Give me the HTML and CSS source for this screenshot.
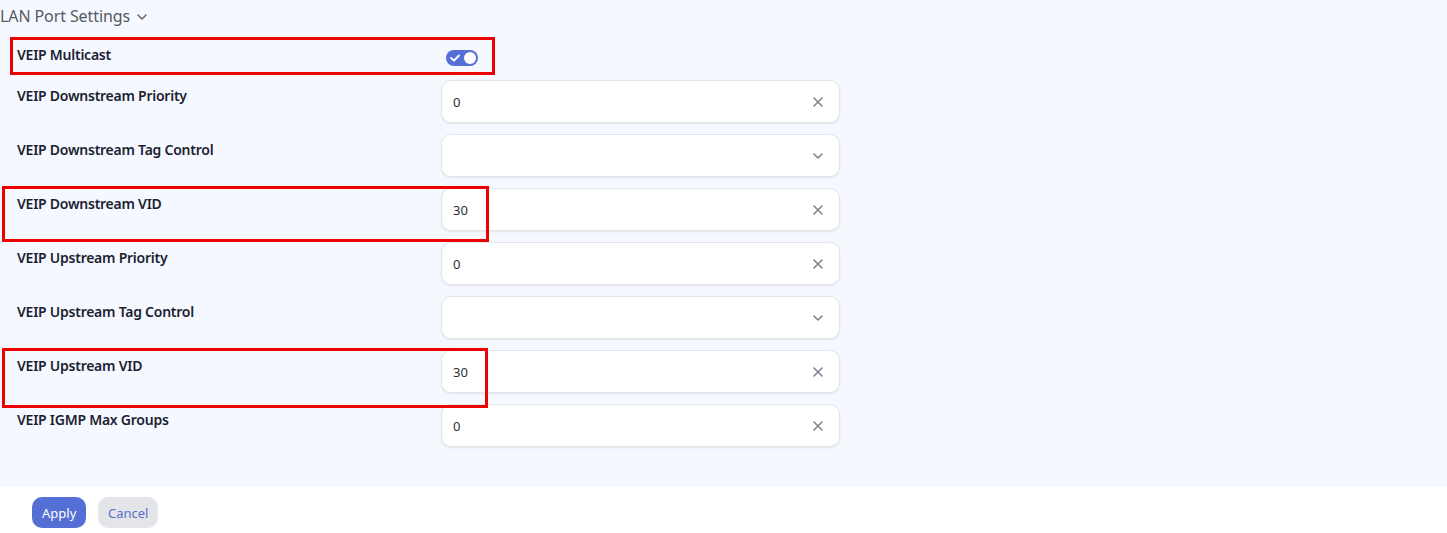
FILE: index.html
```html
<!DOCTYPE html>
<html>
<head>
<meta charset="utf-8">
<link rel="stylesheet" href="styles.css">
</head>
<body>
<div class="page">
  <section class="panel">
    <div class="panel-head">
      <span class="panel-title">LAN Port Settings</span>
      <svg class="head-chev" width="12" height="8" viewBox="0 0 12 8"><path d="M2 2 L6 6 L10 2" fill="none" stroke="#666" stroke-width="1.5" stroke-linecap="round" stroke-linejoin="round"/></svg>
    </div>
    <div class="form">
      <div class="row row-toggle">
        <div class="label">VEIP Multicast</div>
        <div class="toggle">
          <svg width="10" height="8" viewBox="0 0 10 8" class="check"><path d="M1 4 L4 6.5 L9 1.5" fill="none" stroke="#fff" stroke-width="1.8" stroke-linecap="round" stroke-linejoin="round"/></svg>
          <span class="knob"></span>
        </div>
      </div>
      <div class="row">
        <div class="label">VEIP Downstream Priority</div>
        <div class="field"><span class="value">0</span><svg class="icon" width="12" height="12" viewBox="0 0 12 12"><path d="M2 2 L10 10 M10 2 L2 10" stroke="#80838f" stroke-width="1.6" stroke-linecap="round"/></svg></div>
      </div>
      <div class="row">
        <div class="label">VEIP Downstream Tag Control</div>
        <div class="field"><span class="value"></span><svg class="icon" width="12" height="8" viewBox="0 0 12 8"><path d="M2 2 L6 6 L10 2" fill="none" stroke="#80838f" stroke-width="1.6" stroke-linecap="round" stroke-linejoin="round"/></svg></div>
      </div>
      <div class="row">
        <div class="label">VEIP Downstream VID</div>
        <div class="field"><span class="value">30</span><svg class="icon" width="12" height="12" viewBox="0 0 12 12"><path d="M2 2 L10 10 M10 2 L2 10" stroke="#80838f" stroke-width="1.6" stroke-linecap="round"/></svg></div>
      </div>
      <div class="row">
        <div class="label">VEIP Upstream Priority</div>
        <div class="field"><span class="value">0</span><svg class="icon" width="12" height="12" viewBox="0 0 12 12"><path d="M2 2 L10 10 M10 2 L2 10" stroke="#80838f" stroke-width="1.6" stroke-linecap="round"/></svg></div>
      </div>
      <div class="row">
        <div class="label">VEIP Upstream Tag Control</div>
        <div class="field"><span class="value"></span><svg class="icon" width="12" height="8" viewBox="0 0 12 8"><path d="M2 2 L6 6 L10 2" fill="none" stroke="#80838f" stroke-width="1.6" stroke-linecap="round" stroke-linejoin="round"/></svg></div>
      </div>
      <div class="row">
        <div class="label">VEIP Upstream VID</div>
        <div class="field"><span class="value">30</span><svg class="icon" width="12" height="12" viewBox="0 0 12 12"><path d="M2 2 L10 10 M10 2 L2 10" stroke="#80838f" stroke-width="1.6" stroke-linecap="round"/></svg></div>
      </div>
      <div class="row">
        <div class="label">VEIP IGMP Max Groups</div>
        <div class="field"><span class="value">0</span><svg class="icon" width="12" height="12" viewBox="0 0 12 12"><path d="M2 2 L10 10 M10 2 L2 10" stroke="#80838f" stroke-width="1.6" stroke-linecap="round"/></svg></div>
      </div>
    </div>
  </section>
  <div class="actions">
    <button class="btn btn-primary">Apply</button>
    <button class="btn btn-secondary">Cancel</button>
  </div>
  <div class="mark mark-1"></div>
  <div class="mark mark-2"></div>
  <div class="mark mark-3"></div>
</div>
</body>
</html>
```
FILE: styles.css
```css
html, body {
  margin: 0;
  padding: 0;
  background: #ffffff;
  font-family: "Noto Sans", "Open Sans", sans-serif;
}
.page {
  position: relative;
  width: 1447px;
}
.panel {
  background: #f5f8fe;
  padding-bottom: 40px;
}
.panel-head {
  display: flex;
  align-items: center;
  gap: 6px;
  height: 32px;
}
.panel-title {
  font-size: 16px;
  line-height: 32px;
  color: #555a63;
  letter-spacing: -0.1px;
}
.head-chev {
  margin-top: 2px;
}
.form {
  padding-left: 17px;
  padding-top: 11px;
  display: flex;
  flex-direction: column;
  gap: 11px;
}
.row {
  display: flex;
  align-items: flex-start;
}
.label {
  width: 424px;
  font-size: 14px;
  font-weight: 600;
  line-height: 20px;
  color: #1c1f33;
  padding-top: 6px;
  letter-spacing: -0.25px;
}
.row-toggle {
  height: 26px;
  align-items: center;
}
.row-toggle .label {
  padding-top: 0;
  margin-top: -2px;
}
.toggle {
  margin-left: 5px;
  width: 32px;
  height: 16px;
  border-radius: 8px;
  background: #5470d6;
  display: flex;
  align-items: center;
  justify-content: space-between;
  padding: 0 2px 0 4px;
  box-sizing: border-box;
  margin-top: 4px;
}
.knob {
  width: 12px;
  height: 12px;
  border-radius: 50%;
  background: #fff;
}
.field {
  width: 399px;
  height: 43px;
  box-sizing: border-box;
  background: #fff;
  border: 1px solid #e3e5ea;
  border-radius: 10px;
  box-shadow: 0 1px 2px rgba(0, 0, 0, 0.08);
  display: flex;
  align-items: center;
  justify-content: space-between;
  padding: 0 15px 0 11px;
}
.value {
  font-size: 13px;
  color: #2a2d3a;
}
.actions {
  display: flex;
  gap: 12px;
  padding: 10px 0 0 32px;
}
.btn {
  height: 31px;
  border: none;
  border-radius: 10px;
  font-family: "Noto Sans", "Open Sans", sans-serif;
  font-size: 13px;
  padding: 0 10px;
}
.btn-primary {
  background: #5470d6;
  color: #fff;
  width: 54px;
}
.btn-secondary {
  background: #e4e5e8;
  color: #5a6fc9;
  width: 60px;
}
.mark {
  position: absolute;
  border: 3px solid #ee0000;
  box-sizing: border-box;
}
.mark-1 {
  left: 10px;
  top: 37px;
  width: 485px;
  height: 38px;
}
.mark-2 {
  left: 2px;
  top: 186px;
  width: 487px;
  height: 56px;
}
.mark-3 {
  left: 2px;
  top: 348px;
  width: 486px;
  height: 60px;
}
```
